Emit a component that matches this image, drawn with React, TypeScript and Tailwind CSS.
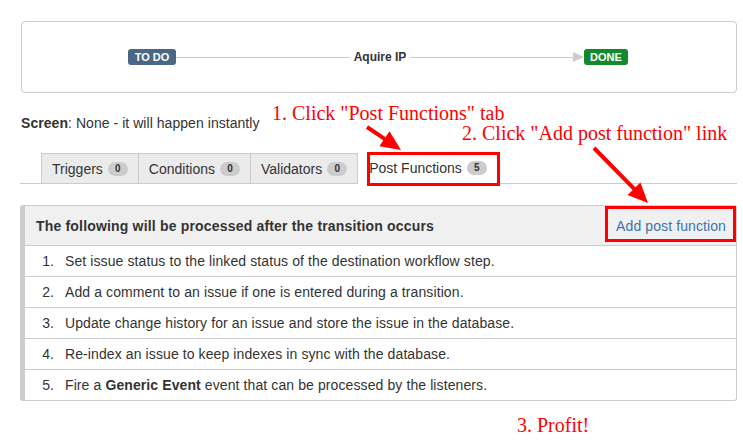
import React from "react";

const rows: React.ReactNode[] = [
  "Set issue status to the linked status of the destination workflow step.",
  "Add a comment to an issue if one is entered during a transition.",
  "Update change history for an issue and store the issue in the database.",
  "Re-index an issue to keep indexes in sync with the database.",
  <>
    Fire a <b>Generic Event</b> event that can be processed by the listeners.
  </>,
];

const tabs = [
  { label: "Triggers", count: 0 },
  { label: "Conditions", count: 0 },
  { label: "Validators", count: 0 },
  { label: "Post Functions", count: 5, active: true },
];

function Badge({ n }: { n: number }) {
  return (
    <span className="ml-[5px] inline-block h-[14px] w-[20px] rounded-full bg-[#cccccc] text-center text-[10px] font-bold leading-[14px] text-[#333]">
      {n}
    </span>
  );
}

function Arrow({ x1, y1, x2, y2 }: { x1: number; y1: number; x2: number; y2: number }) {
  const dx = x2 - x1;
  const dy = y2 - y1;
  const len = Math.hypot(dx, dy);
  const ux = dx / len;
  const uy = dy / len;
  const hl = 20;
  const hw = 9;
  const bx = x2 - ux * hl;
  const by = y2 - uy * hl;
  const pts = `${x2},${y2} ${bx - uy * hw},${by + ux * hw} ${bx + uy * hw},${by - ux * hw}`;
  return (
    <g>
      <line x1={x1} y1={y1} x2={bx + ux * 2} y2={by + uy * 2} stroke="#ff0000" strokeWidth={4} />
      <polygon points={pts} fill="#ff0000" />
    </g>
  );
}

export default function App() {
  return (
    <div className="relative h-[444px] w-[743px] overflow-hidden bg-white font-['Liberation_Sans',Arial,sans-serif] text-[14px] leading-[20px] text-[#333]">
      <div className="pl-[20px] pr-[6px] pt-[21px]">
        {/* workflow transition diagram */}
        <div className="ml-px flex h-[72px] items-center rounded-[4px] border border-[#cccccc] pl-[106px] pr-[108px]">
          <span className="h-[16px] w-[48px] rounded-[3px] bg-[#4a6785] text-center text-[11px] font-bold leading-[16px] text-white">
            TO DO
          </span>
          <div className="flex flex-1 items-center">
            <div className="h-px flex-1 bg-[#cccccc]" />
            <span className="px-[4px] text-[12px] font-bold leading-[16px] text-[#333]">Aquire IP</span>
            <div className="flex flex-1 items-center">
              <div className="h-px flex-1 bg-[#cccccc]" />
              <div className="h-0 w-0 border-y-[5px] border-l-[11px] border-y-transparent border-l-[#cccccc]" />
            </div>
          </div>
          <span className="h-[16px] w-[44px] rounded-[3px] bg-[#14892c] text-center text-[11px] font-bold leading-[16px] text-white">
            DONE
          </span>
        </div>

        <p className="ml-px mt-[20px] tracking-[0.05px]">
          <b>Screen</b>: None - it will happen instantly
        </p>

        {/* tabs */}
        <div className="mt-[20px] flex items-end border-b border-[#cccccc] pl-[21px]">
          {tabs.map((t, i) =>
            t.active ? (
              <div key={t.label} className="-mb-px flex h-[31px] items-center bg-white pb-px pl-[11px] pr-[10px]">
                {t.label}
                <Badge n={t.count} />
              </div>
            ) : (
              <div
                key={t.label}
                className={
                  "flex h-[30px] items-center border-r border-t border-[#cccccc] bg-[#ebebeb] px-[10px] " +
                  (i === 0 ? "border-l" : "")
                }
              >
                {t.label}
                <Badge n={t.count} />
              </div>
            )
          )}
        </div>

        {/* post functions panel */}
        <div className="mt-[21px] overflow-hidden rounded-[3px] border border-l-[5px] border-[#cccccc]">
          <div className="flex h-[39px] items-center justify-between bg-[#f0f0f0] pl-[11px] pr-[10px]">
            <span className="font-bold tracking-[0.18px]">The following will be processed after the transition occurs</span>
            <span className="tracking-[0.1px] text-[#3b73af]">Add post function</span>
          </div>
          {rows.map((r, i) => (
            <div key={i} className="flex h-[31px] items-center border-t border-[#cccccc]">
              <span className="w-[29px] text-right">{i + 1}.</span>
              <span className="pl-[11px] tracking-[0.1px]">{r}</span>
            </div>
          ))}
        </div>
      </div>

      {/* annotations */}
      <div className="absolute left-[367px] top-[152px] h-[34px] w-[133px] border-[3px] border-[#ff0000]" />
      <div className="absolute left-[605px] top-[206px] h-[36px] w-[131px] border-[3px] border-[#ff0000]" />
      <span className="absolute left-[272px] top-[103px] whitespace-nowrap font-['Liberation_Serif','Times_New_Roman',serif] text-[20px] leading-[20px] text-[#ff0000]">
        1. Click "Post Functions" tab
      </span>
      <span className="absolute left-[462px] top-[123px] whitespace-nowrap font-['Liberation_Serif','Times_New_Roman',serif] text-[20px] leading-[20px] text-[#ff0000]">
        2. Click "Add post function" link
      </span>
      <span className="absolute left-[517px] top-[415px] whitespace-nowrap font-['Liberation_Serif','Times_New_Roman',serif] text-[20px] leading-[20px] text-[#ff0000]">
        3. Profit!
      </span>
      <svg className="pointer-events-none absolute left-0 top-0" width={743} height={444}>
        <Arrow x1={367} y1={127} x2={401} y2={150} />
        <Arrow x1={594} y1={148} x2={648} y2={203} />
      </svg>
    </div>
  );
}
